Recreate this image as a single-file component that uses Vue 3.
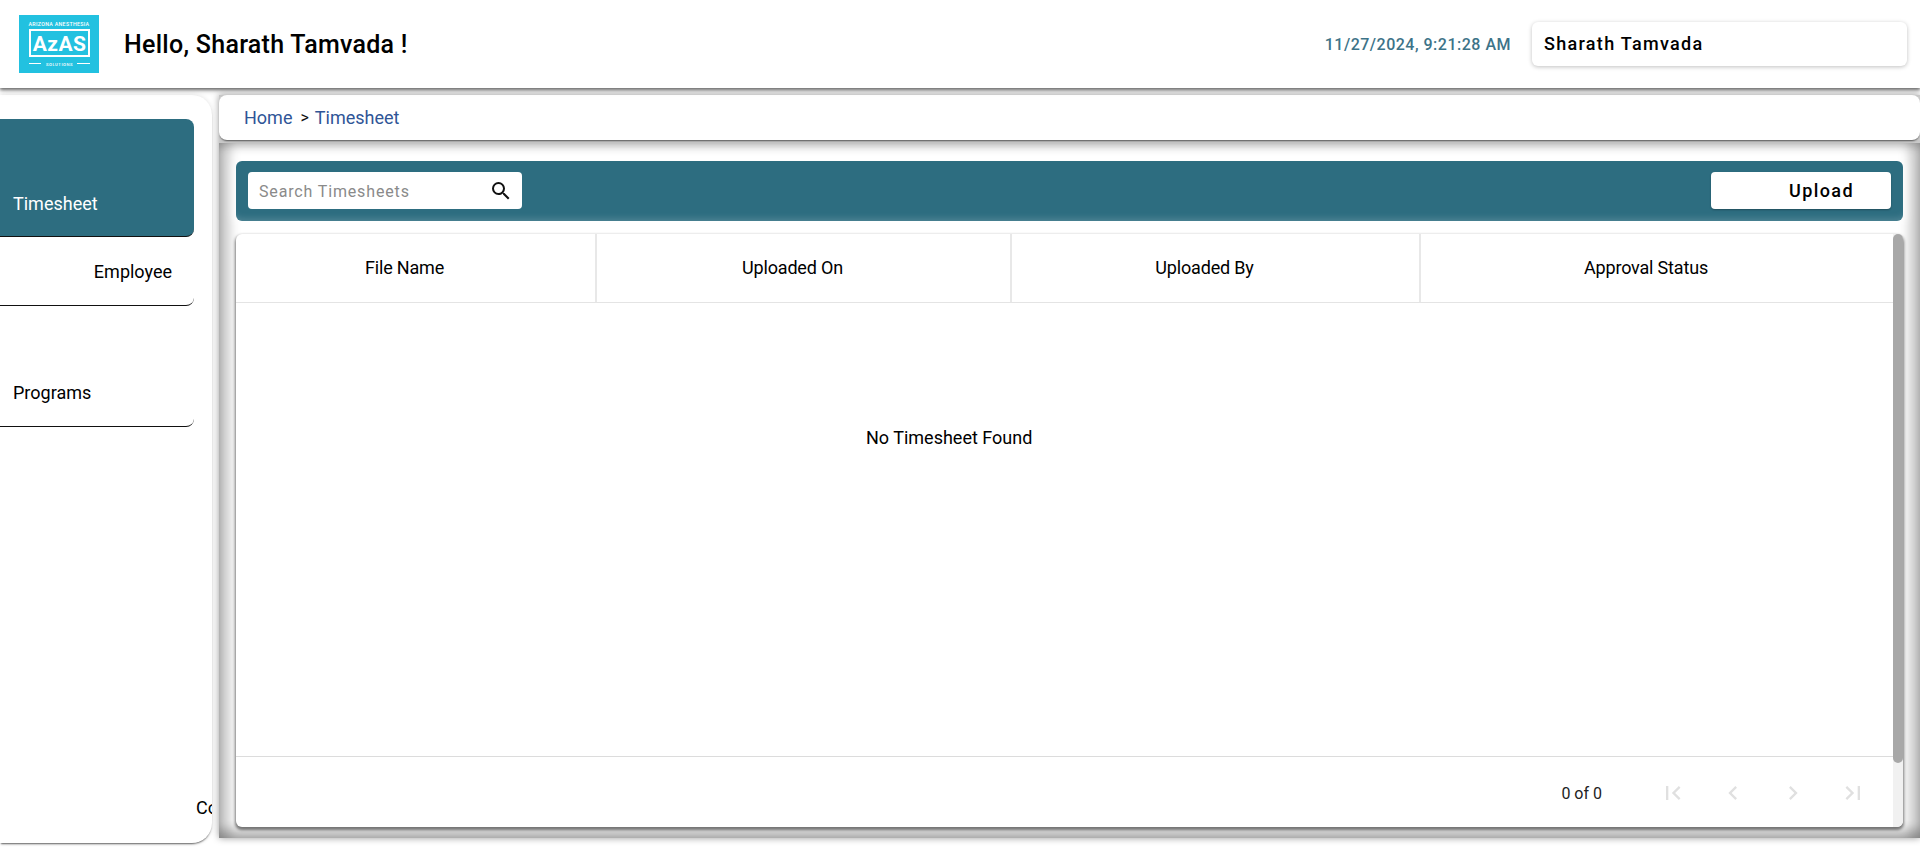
<script setup>
const columns = [
  { label: 'File Name', width: '361px' },
  { label: 'Uploaded On', width: '415px' },
  { label: 'Uploaded By', width: '409px' },
  { label: 'Approval Status', width: 'auto' },
]
</script>

<template>
  <div class="page">
    <header class="header">
      <svg class="logo" width="80" height="58" viewBox="0 0 80 58" role="img" aria-label="AzAS logo">
        <rect width="80" height="58" fill="#22c1e0" />
        <text x="40" y="10.5" text-anchor="middle" class="logo-small">ARIZONA ANESTHESIA</text>
        <rect x="11" y="15" width="59" height="26" fill="none" stroke="#fff" stroke-width="2" />
        <text x="40.5" y="36" text-anchor="middle" class="logo-big">AzAS</text>
        <path d="M10 48.5h12M58 48.5h13" stroke="#fff" stroke-width="1" />
        <text x="40.5" y="50.5" text-anchor="middle" class="logo-tiny">SOLUTIONS</text>
      </svg>
      <h1 class="greeting">Hello, Sharath Tamvada !</h1>
      <span class="clock">11/27/2024, 9:21:28 AM</span>
      <div class="user-box">Sharath Tamvada</div>
    </header>

    <div class="body">
      <aside class="sidebar">
        <nav class="nav">
          <a class="nav-item active">Timesheet</a>
          <a class="nav-item employee">Employee</a>
          <a class="nav-item programs">Programs</a>
        </nav>
        <span class="clipped">Co</span>
      </aside>

      <main class="main">
        <div class="crumbs">
          <span class="crumb">Home</span>
          <span class="sep">&gt;</span>
          <span class="crumb">Timesheet</span>
        </div>

        <section class="panel">
          <div class="toolbar">
            <div class="search">
              <input class="search-input" placeholder="Search Timesheets" />
              <svg width="24" height="24" viewBox="0 0 24 24" class="search-icon">
                <path fill="#111" d="M15.5 14h-.79l-.28-.27A6.47 6.47 0 0 0 16 9.5 6.5 6.5 0 1 0 9.5 16c1.61 0 3.09-.59 4.23-1.57l.27.28v.79l5 4.99L20.49 19l-4.99-5zm-6 0C7.01 14 5 11.99 5 9.5S7.01 5 9.5 5 14 7.01 14 9.5 11.99 14 9.5 14z" />
              </svg>
            </div>
            <button class="upload">Upload</button>
          </div>

          <div class="table">
            <div class="thead">
              <div v-for="col in columns" :key="col.label" class="th" :style="{ flex: col.width === 'auto' ? '1' : '0 0 ' + col.width }">{{ col.label }}</div>
            </div>
            <div class="tbody"><span class="empty">No Timesheet Found</span></div>
            <div class="tfoot">
              <span class="count">0 of 0</span>
              <div class="pager">
                <svg width="28" height="28" viewBox="0 0 24 24"><path d="M18.41 16.59L13.82 12l4.59-4.59L17 6l-6 6 6 6zM6 6h2v12H6z" /></svg>
                <svg width="28" height="28" viewBox="0 0 24 24"><path d="M15.41 7.41L14 6l-6 6 6 6 1.41-1.41L10.83 12z" /></svg>
                <svg width="28" height="28" viewBox="0 0 24 24"><path d="M10 6L8.59 7.41 13.17 12l-4.58 4.59L10 18l6-6z" /></svg>
                <svg width="28" height="28" viewBox="0 0 24 24"><path d="M5.59 7.41L10.18 12l-4.59 4.59L7 18l6-6-6-6zM16 6h2v12h-2z" /></svg>
              </div>
            </div>
            <div class="scrollbar"><div class="thumb"></div></div>
          </div>
        </section>
      </main>
    </div>
  </div>
</template>

<style>
html, body { margin: 0; background: #fff; overflow: hidden; }
</style>

<style scoped>
.page {
  width: 1920px;
  height: 847px;
  font-family: Roboto, "Liberation Sans", sans-serif;
  color: #000;
  background: #fff;
  overflow: hidden;
}
.header {
  height: 88px;
  box-sizing: border-box;
  display: flex;
  align-items: center;
  padding: 0 13px 0 19px;
  background: #fff;
  box-shadow: 0 2px 3px rgba(0, 0, 0, .5), 0 3px 6px rgba(0, 0, 0, .15);
  position: relative;
  z-index: 2;
}
.logo { flex: none; margin-right: 25px; }
.logo-small { font: 500 5.3px Roboto, sans-serif; fill: #fff; letter-spacing: .3px; }
.logo-big { font: 700 21px Roboto, sans-serif; fill: #fff; letter-spacing: .4px; }
.logo-tiny { font: 500 4.2px Roboto, sans-serif; fill: #fff; letter-spacing: .5px; }
.greeting { margin: 0; flex: 1; padding-top: 2px; font-size: 25px; font-weight: 500; line-height: 32px; letter-spacing: .28px; }
.clock { font-size: 16px; font-weight: 500; color: #3d7388; letter-spacing: .5px; margin-right: 21px; }
.user-box {
  width: 375px;
  height: 44px;
  box-sizing: border-box;
  padding: 0 12px;
  line-height: 44px;
  font-size: 18px;
  font-weight: 500;
  letter-spacing: 1.3px;
  border-radius: 6px;
  background: #fff;
  box-shadow: 0 1px 4px rgba(0, 0, 0, .25);
}
.body { display: flex; height: 759px; }
.sidebar {
  width: 212px;
  height: 748px;
  margin-top: 7px;
  flex: none;
  position: relative;
  background: #fff;
  border-radius: 0 20px 20px 0;
  box-shadow: 0 2px 2px -1px rgba(0, 0, 0, .6), 0 0 5px rgba(0, 0, 0, .12);
}
.nav { display: flex; flex-direction: column; padding-top: 24px; }
.nav-item {
  width: 194px;
  box-sizing: border-box;
  display: flex;
  font-size: 18px;
  border-radius: 0 0 8px 0;
  border-bottom: 1px solid #111;
}
.active {
  height: 118px;
  align-items: flex-end;
  padding: 0 0 22px 13px;
  color: #fff;
  background: #2d6d80;
  border-radius: 0 8px 8px 0;
}
.employee { height: 69px; justify-content: flex-end; padding: 24px 22px 0 0; }
.programs { height: 121px; align-items: flex-end; padding: 0 0 23px 13px; }
.clipped {
  position: absolute;
  left: 196px;
  top: 701px;
  width: 16px;
  overflow: hidden;
  font-size: 18px;
  line-height: 24px;
}
.main {
  width: 1701px;
  height: 743px;
  margin-left: 7px;
  margin-top: 7px;
  flex: none;
  display: flex;
  flex-direction: column;
  background: #c9c9c9;
  box-shadow: 0 0 7px rgba(0, 0, 0, .4);
}
.crumbs {
  height: 45px;
  flex: none;
  display: flex;
  align-items: center;
  padding: 0 0 0 25px;
  box-sizing: border-box;
  background: #fff;
  border-radius: 8px;
  box-shadow: 0 2px 2px -1px rgba(0, 0, 0, .6);
  font-size: 18px;
  position: relative;
  z-index: 1;
}
.crumb { color: #2f5597; }
.sep { margin: 0 6px 0 8px; font-size: 16px; color: #111; }
.panel {
  height: 695px;
  margin-top: 3px;
  box-sizing: border-box;
  padding: 18px 17px 11px;
  display: flex;
  flex-direction: column;
  background: #fff;
  box-shadow:
    inset 14px 0 12px -4px rgba(0, 0, 0, .24),
    inset -14px 0 12px -4px rgba(0, 0, 0, .24),
    inset 0 -12px 10px -3px rgba(0, 0, 0, .24),
    inset 0 8px 8px -3px rgba(0, 0, 0, .16);
}
.toolbar {
  height: 60px;
  flex: none;
  display: flex;
  align-items: center;
  justify-content: space-between;
  padding: 0 12px;
  background: #2d6d80;
  border-radius: 6px;
  box-shadow: inset 0 -7px 7px -5px rgba(255, 255, 255, .18), 0 0 10px 3px rgba(255, 255, 255, .6);
}
.search {
  width: 274px;
  height: 37px;
  margin-bottom: 1px;
  box-sizing: border-box;
  display: flex;
  align-items: center;
  padding: 0 9px 0 11px;
  background: #fff;
  border-radius: 4px;
}
.search-input {
  flex: 1;
  min-width: 0;
  border: 0;
  outline: 0;
  padding: 2px 0 0;
  background: transparent;
  font: 400 16px Roboto, sans-serif;
  letter-spacing: .85px;
}
.search-input::placeholder { color: #8a8a8a; opacity: 1; }
.search-icon { flex: none; }
.upload {
  width: 180px;
  height: 37px;
  margin-bottom: 1px;
  box-sizing: border-box;
  padding: 0 0 0 78px;
  text-align: left;
  border: 0;
  background: #fff;
  border-radius: 4px;
  font: 500 18px Roboto, sans-serif;
  letter-spacing: 1.4px;
  color: #000;
  box-shadow: 0 1px 2px rgba(0, 0, 0, .3);
}
.table {
  flex: 1;
  margin-top: 13px;
  position: relative;
  display: flex;
  flex-direction: column;
  background: #fff;
  border-radius: 6px;
  box-shadow: 0 2px 3px 1px rgba(0, 0, 0, .5);
}
.thead { height: 68px; flex: none; display: flex; border-bottom: 1px solid #e4e4e4; padding-right: 10px; }
.th {
  display: flex;
  align-items: center;
  justify-content: center;
  padding: 0 22px 2px 0;
  font-size: 18px;
  font-weight: 450;
  letter-spacing: -.18px;
  border-right: 2px solid #e8e8e8;
  box-sizing: border-box;
}
.th:last-child { border-right: 0; }
.tbody { flex: 1; position: relative; }
.empty { position: absolute; left: 630px; top: 123px; font-size: 18px; line-height: 24px; }
.tfoot {
  height: 71px;
  flex: none;
  box-sizing: border-box;
  display: flex;
  align-items: center;
  justify-content: flex-end;
  padding: 2px 36px 0 0;
  border-top: 1px solid #dcdcdc;
}
.count { font-size: 16px; margin-right: 57px; color: #222; }
.pager { display: flex; gap: 32px; }
.pager path { fill: #e0e0e0; }
.scrollbar { position: absolute; right: 0; top: 0; bottom: 0; width: 10px; background: #f1f1f1; border-radius: 0 6px 6px 0; }
.thumb { height: 529px; background: #a8a8a8; border-radius: 5px; }
</style>
